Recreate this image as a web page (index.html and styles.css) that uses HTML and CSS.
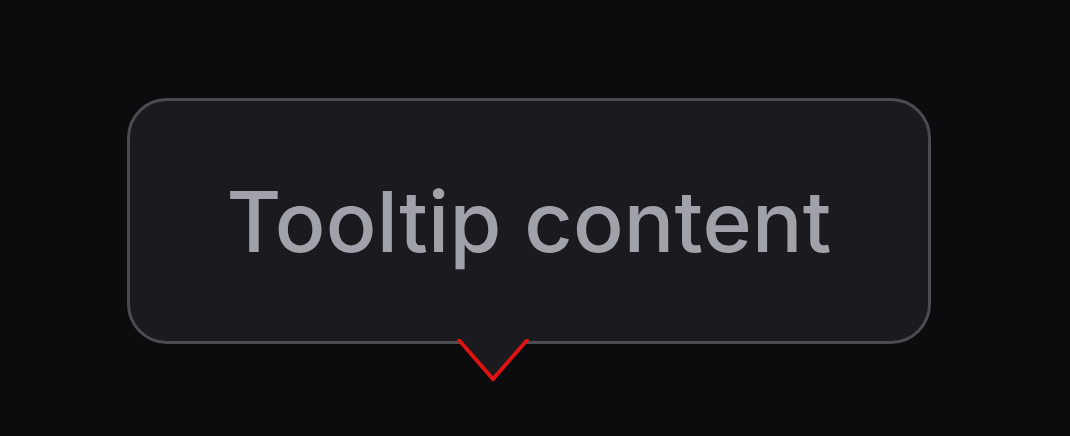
FILE: index.html
```html
<!DOCTYPE html>
<html lang="en">
<head>
<meta charset="utf-8">
<link rel="stylesheet" href="styles.css">
</head>
<body>
<div class="stage">
  <div class="tooltip">
    <span class="label">Tooltip content</span>
    <svg class="arrow" width="74" height="46" viewBox="0 0 74 46">
      <polyline points="2,0 37,40 72,0" fill="#1b1b1f" stroke="#e01212" stroke-width="3.8" stroke-linejoin="miter"/>
    </svg>
  </div>
</div>
</body>
</html>
```
FILE: styles.css
```css
html, body {
  margin: 0;
  padding: 0;
  background: #0c0c0e;
}
.stage {
  width: 1070px;
  height: 436px;
  padding: 98px 0 0 127px;
  box-sizing: border-box;
}
.tooltip {
  position: relative;
  width: 804px;
  height: 246px;
  box-sizing: border-box;
  border: 3.5px solid #4b4b51;
  border-radius: 40px;
  background: #1b1b1f;
  display: flex;
  align-items: center;
  justify-content: center;
  padding-top: 2px;
}
.label {
  font-family: Inter, "Noto Sans", sans-serif;
  font-size: 84px;
  font-weight: 500;
  color: #a1a1aa;
  line-height: 1;
  letter-spacing: 0.2px;
}
.arrow {
  position: absolute;
  left: 326px;
  top: 238px;
  display: block;
}
```
